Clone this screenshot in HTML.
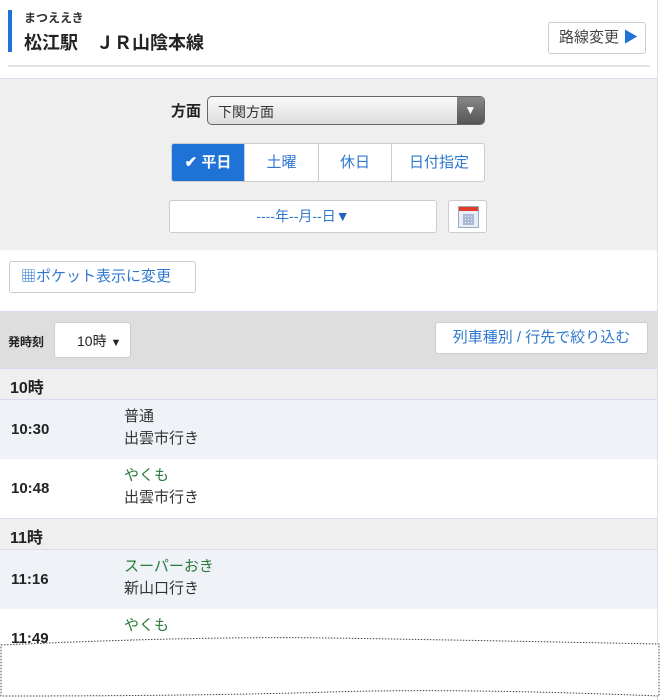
<!DOCTYPE html>
<html><head><meta charset="utf-8"><style>
*{box-sizing:border-box;margin:0;padding:0}
body{width:661px;height:700px;overflow:hidden;background:#fff;font-family:"Liberation Sans","Noto Sans CJK JP",sans-serif;color:#333;position:relative}
.wrap{position:absolute;left:0;top:0;width:658px;height:700px;border-right:1px solid #dcdcee}
.abs{position:absolute}
.btn{position:absolute;background:#fff;border:1px solid #ccc;border-radius:3px}
.blue{color:#2f78d0}
.row{position:absolute;left:0;width:657px}
.t{position:absolute;left:11px;font-weight:bold;font-size:15px;color:#222}
.n{position:absolute;left:124px;font-size:15px;line-height:22px}
.g{color:#2a7a3a}
</style></head><body><div class="wrap">
<div class="abs" style="left:8px;top:10px;width:4px;height:42px;background:#1f72d6"></div>
<div class="abs" style="left:24px;top:9px;font-size:12px;font-weight:bold;color:#333">まつええき</div>
<div class="abs" style="left:24px;top:29px;font-size:18px;font-weight:bold;color:#222">松江駅　ＪＲ山陰本線</div>
<div class="btn" style="left:548px;top:22px;width:98px;height:32px;font-size:15px;line-height:30px;padding-left:10px;color:#444">路線変更 <span style="color:#1f72d6">▶</span></div>
<div class="abs" style="left:8px;top:65px;width:642px;height:2px;background:#e2e2e2"></div>
<div class="abs" style="left:0;top:78px;width:657px;height:172px;background:#efefef;border-top:1px solid #dadaf0"></div>
<div class="abs" style="left:171px;top:100px;font-size:15px;font-weight:bold;color:#222">方面</div>
<div class="abs" style="left:207px;top:96px;width:278px;height:29px;border:1px solid #666;border-radius:5px;background:linear-gradient(#fafafa,#ddd);overflow:hidden">
<span style="position:absolute;left:10px;top:5px;font-size:14px;color:#333">下関方面</span>
<div style="position:absolute;right:0;top:0;width:27px;height:27px;background:linear-gradient(#888,#555);color:#fff;font-size:12px;text-align:center;line-height:27px">▼</div></div>
<div class="abs" style="left:171px;top:143px;width:314px;height:39px;border:1px solid #ccc;border-radius:3px;background:#fff;font-size:15px;overflow:hidden">
<div class="abs" style="left:0;top:0;width:72px;height:39px;background:#1f72d6;color:#fff;font-weight:bold;line-height:37px;text-align:center">✔ 平日</div>
<div class="abs blue" style="left:72px;top:0;width:74px;height:39px;border-left:1px solid #ccc;line-height:37px;text-align:center">土曜</div>
<div class="abs blue" style="left:146px;top:0;width:73px;height:39px;border-left:1px solid #ccc;line-height:37px;text-align:center">休日</div>
<div class="abs blue" style="left:219px;top:0;width:95px;height:39px;border-left:1px solid #ccc;line-height:37px;text-align:center">日付指定</div></div>
<div class="btn blue" style="left:169px;top:200px;width:268px;height:33px;font-size:14px;line-height:31px;text-align:center">----年--月--日<span style="color:#1f60c0">▼</span></div>
<div class="btn" style="left:448px;top:200px;width:39px;height:33px">
<div class="abs" style="left:9px;top:5px;width:21px;height:22px;border:1px solid #9ab;background:#e8eef8"><div style="height:4px;background:#e53a2a"></div><div style="margin:3px 4px;height:11px;background:repeating-linear-gradient(90deg,#8fa3c8 0 2px,transparent 2px 3px),repeating-linear-gradient(0deg,#8fa3c8 0 2px,transparent 2px 3px);background-blend-mode:normal;opacity:.7"></div></div></div>
<div class="btn blue" style="left:9px;top:261px;width:187px;height:32px;font-size:15px;line-height:30px;padding-left:11px">▦ポケット表示に変更</div>
<div class="abs" style="left:0;top:311px;width:657px;height:58px;background:#dedede;border-top:1px solid #dadaf0"></div>
<div class="abs" style="left:8px;top:333px;font-size:12px;font-weight:bold;color:#222">発時刻</div>
<div class="btn" style="left:54px;top:322px;width:77px;height:36px;font-size:14px;line-height:36px;padding-left:22px;color:#222">10時 <span style="font-size:11px">▼</span></div>
<div class="btn blue" style="left:435px;top:322px;width:213px;height:32px;font-size:15px;line-height:30px;text-align:center">列車種別 / 行先で絞り込む</div>
<div class="row" style="top:368px;height:32px;background:#efefef;border-top:1px solid #dadaf0;border-bottom:1px solid #dadaf0"><span class="t" style="top:5px;left:10px;font-size:16px">10時</span></div>
<div class="row" style="top:400px;height:59px;background:#eff3f8"><span class="t" style="top:21px">10:30</span><div class="n" style="top:6px">普通<br>出雲市行き</div></div>
<div class="row" style="top:459px;height:59px;background:#fff"><span class="t" style="top:21px">10:48</span><div class="n" style="top:6px"><span class="g">やくも</span><br>出雲市行き</div></div>
<div class="row" style="top:518px;height:32px;background:#efefef;border-top:1px solid #dadaf0;border-bottom:1px solid #dadaf0"><span class="t" style="top:5px;left:10px;font-size:16px">11時</span></div>
<div class="row" style="top:550px;height:59px;background:#eff3f8"><span class="t" style="top:21px">11:16</span><div class="n" style="top:6px"><span class="g">スーパーおき</span><br>新山口行き</div></div>
<div class="row" style="top:609px;height:91px;background:#fff"><span class="t" style="top:21px">11:49</span><div class="n" style="top:6px"><span class="g">やくも</span><br>出雲市行き</div></div>
</div>
<svg class="abs" style="left:0;top:630px" width="661" height="70"><path d="M1 15 Q200 6 330 8 T659 14 L659 66 Q460 58 330 62 T1 66 Z" fill="#fff" stroke="#444" stroke-width="1" stroke-dasharray="1.5 1.5"/></svg>
</body></html>
